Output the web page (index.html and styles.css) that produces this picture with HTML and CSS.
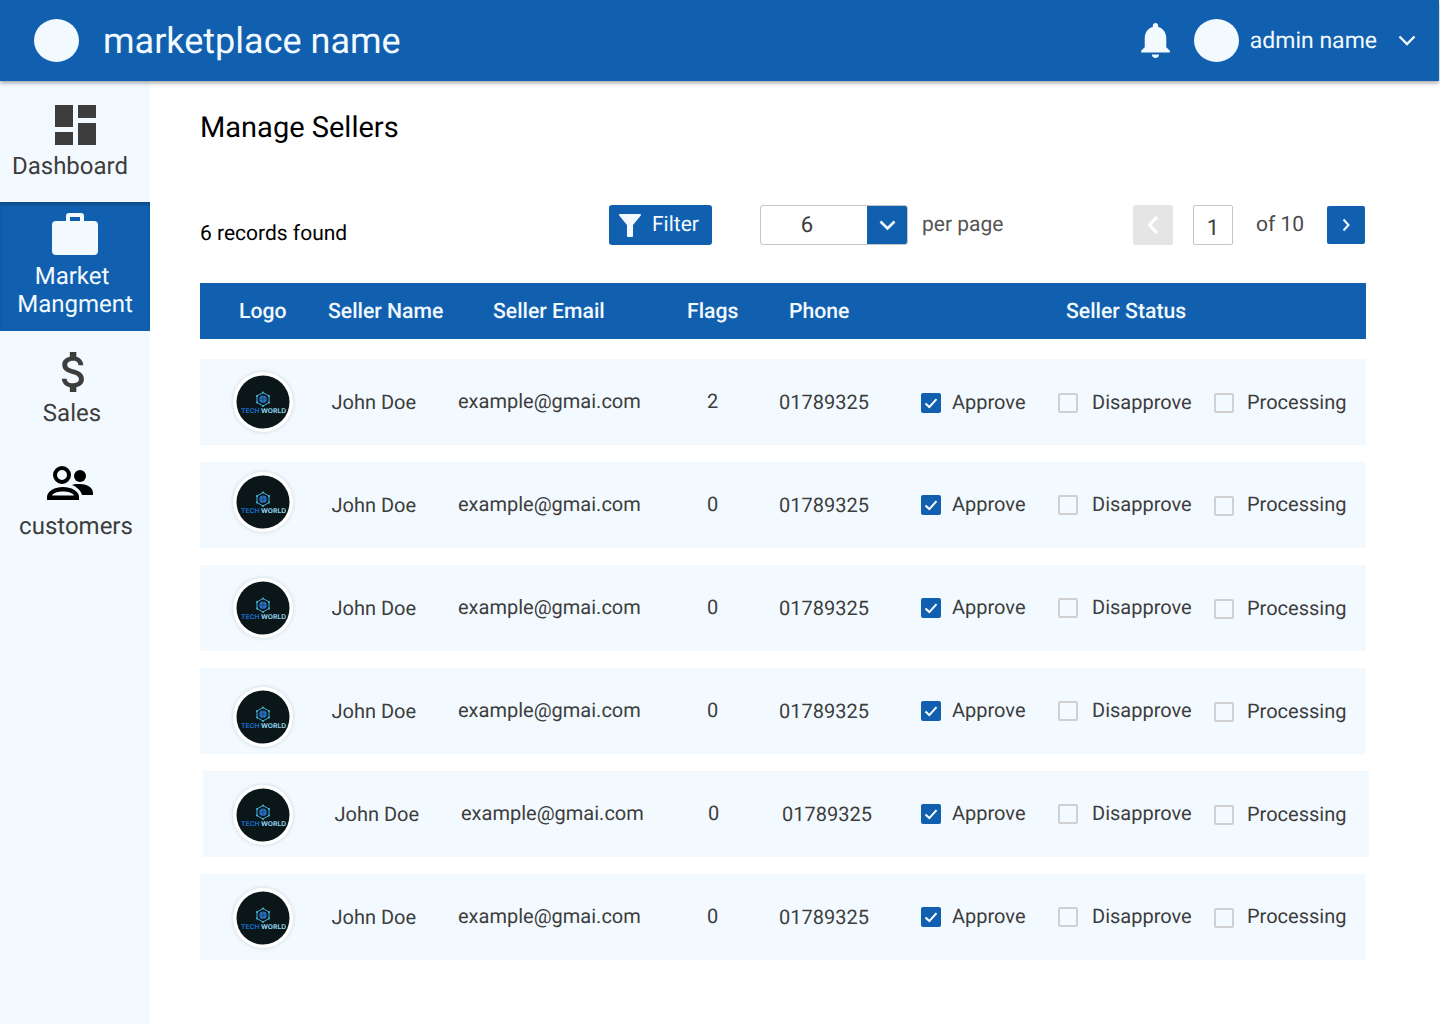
FILE: index.html
```html
<!DOCTYPE html>
<html lang="en">
<head>
    <meta charset="UTF-8">
    <meta name="viewport" content="width=device-width, initial-scale=1.0">
    <title>Manage Sellers</title>
    <link rel="stylesheet" href="styles.css">
</head>
<body>
    <svg class="sprites" width="0" height="0">
        <symbol id="logo-mark" viewBox="0 0 60 60">
            <circle cx="30" cy="30" r="30" fill="#ffffff"/>
            <circle cx="30" cy="30" r="26.500" fill="#0a1618"/>
            <path d="M30 20.500l6 3.500v6.500l-6 3.500-6-3.500V24z" fill="none" stroke="#45b5dc" stroke-width="1"/>
            <circle cx="30" cy="20.500" r="1" fill="#45b5dc"/>
            <circle cx="36" cy="24" r="1" fill="#45b5dc"/>
            <circle cx="36" cy="30.500" r="1" fill="#45b5dc"/>
            <circle cx="30" cy="34" r="1" fill="#45b5dc"/>
            <circle cx="24" cy="30.500" r="1" fill="#45b5dc"/>
            <circle cx="24" cy="24" r="1" fill="#45b5dc"/>
            <circle cx="30" cy="27.200" r="3.800" fill="#2a6fc0"/>
            <path d="M26.500 27.200h7M30 23.500v7.400" stroke="#123a6a" stroke-width="0.600"/>
        </symbol>
        <symbol id="tick" viewBox="0 0 20 20">
            <path d="M4.500 10.500l3.800 3.600 7.200-8" fill="none" stroke="#ffffff" stroke-width="2"/>
        </symbol>
    </svg>

    <header class="topbar">
        <div class="brand">
            <span class="avatar brand-logo"></span>
            <span class="brand-name">marketplace name</span>
        </div>
        <div class="account">
            <svg class="bell" viewBox="4 2.5 16 19.5"><path d="M12 22c1.100 0 2-.9 2-2h-4c0 1.100.9 2 2 2zm6-6v-5c0-3.070-1.630-5.640-4.500-6.320V4c0-.83-.67-1.500-1.500-1.500s-1.500.67-1.500 1.500v.68C7.640 5.360 6 7.920 6 11v5l-2 2v1h16v-1l-2-2z" fill="#f3faff"/></svg>
            <span class="avatar"></span>
            <span class="admin-name">admin name</span>
            <svg class="account-arrow" viewBox="0 0 18 11"><path d="M1.500 1.500L9 9l7.500-7.500" fill="none" stroke="#f3faff" stroke-width="2.400"/></svg>
        </div>
    </header>

    <div class="layout">
        <nav class="sidebar">
            <a class="nav-item nav-dashboard">
                <svg class="nav-icon" width="41" height="40" viewBox="0 0 41 40"><path d="M0 0h18v22H0zM0 27h18v13H0zM23 0h18v13H23zM23 18h18v22H23z" fill="#3d3d3d"/></svg>
                <span>Dashboard</span>
            </a>
            <a class="nav-item nav-market active">
                <svg class="nav-icon" width="46" height="42" viewBox="0 0 46 42"><path d="M14 8V3a3 3 0 0 1 3-3h12a3 3 0 0 1 3 3v5h10a4 4 0 0 1 4 4v26a4 4 0 0 1-4 4H4a4 4 0 0 1-4-4V12a4 4 0 0 1 4-4zm4-4v4h10V4z" fill="#f3faff" fill-rule="evenodd"/></svg>
                <span><span class="market-word">Market</span>Mangment</span>
            </a>
            <a class="nav-item nav-sales">
                <svg class="nav-icon" width="26" height="40" viewBox="5 3 12 18" preserveAspectRatio="none"><path d="M11.800 10.900c-2.270-.59-3-1.200-3-2.150 0-1.090 1.010-1.850 2.700-1.850 1.780 0 2.440.85 2.500 2.100h2.210c-.07-1.720-1.120-3.300-3.210-3.810V3h-3v2.160c-1.940.42-3.500 1.680-3.500 3.610 0 2.310 1.910 3.460 4.700 4.130 2.500.6 3 1.480 3 2.410 0 .69-.49 1.790-2.700 1.790-2.060 0-2.870-.92-2.980-2.100h-2.200c.12 2.190 1.760 3.420 3.680 3.830V21h3v-2.150c1.950-.37 3.500-1.500 3.500-3.550 0-2.840-2.430-3.810-4.700-4.400z" fill="#3d3d3d"/></svg>
                <span>Sales</span>
            </a>
            <a class="nav-item nav-customers">
                <svg class="nav-icon" width="46" height="34" viewBox="0 0 46 34">
                    <circle cx="15" cy="9" r="7" fill="none" stroke="#000000" stroke-width="4"/>
                    <circle cx="33" cy="10" r="6" fill="#000000"/>
                    <path d="M0 34v-3c0-6 8-10 16-10s16 4 16 10v3zM5 29.500h22c-1-2.500-6-4-11-4s-10 1.500-11 4z" fill="#000000" fill-rule="evenodd"/>
                    <path d="M25 19c3-1.500 6-1 8-1 6 0 13 3 13 9v2H35c-1-4-5-8-10-10z" fill="#000000"/>
                </svg>
                <span>customers</span>
            </a>
        </nav>

        <main class="content">
            <h1 class="page-title">Manage Sellers</h1>

            <div class="toolbar">
                <span class="records">6 records found</span>
                <button class="filter-btn" type="button">
                    <svg width="22" height="23" viewBox="0 0 22 23"><path d="M1 0h20a1 1 0 0 1 .8 1.600L14 11v11a1 1 0 0 1-1 1H9a1 1 0 0 1-1-1V11L.2 1.600A1 1 0 0 1 1 0z" fill="#f3faff"/></svg>
                    Filter
                </button>
                <div class="per-page-select">
                    <span class="per-page-value">6</span>
                    <span class="per-page-arrow">
                        <svg width="17" height="11" viewBox="0 0 17 11"><path d="M1.500 1.500L8.500 8.500l7-7" fill="none" stroke="#f3faff" stroke-width="2.600"/></svg>
                    </span>
                </div>
                <span class="per-page-label">per page</span>
                <div class="pager">
                    <span class="page-btn prev">
                        <svg width="12" height="20" viewBox="0 0 12 20"><path d="M10 2L2.500 10l7.500 8" fill="none" stroke="#ffffff" stroke-width="3"/></svg>
                    </span>
                    <span class="page-input">1</span>
                    <span class="page-total">of 10</span>
                    <span class="page-btn next">
                        <svg width="8" height="14" viewBox="0 0 8 14"><path d="M1.500 1.500L6.500 7l-5 5.500" fill="none" stroke="#f3faff" stroke-width="2"/></svg>
                    </span>
                </div>
            </div>

            <div class="table-head">
                <span>Logo</span>
                <span>Seller Name</span>
                <span>Seller Email</span>
                <span>Flags</span>
                <span>Phone</span>
                <span>Seller Status</span>
            </div>

            <div class="table-rows">
                <div class="row">
                    <svg class="seller-logo" viewBox="0 0 60 60"><use href="#logo-mark"/><text x="8" y="41" class="logo-text" textLength="45" lengthAdjust="spacingAndGlyphs"><tspan fill="#1a6fd0">TECH</tspan> <tspan fill="#8fd4ef">WORLD</tspan></text></svg>
                    <span>John Doe</span>
                    <span class="raised">example@gmai.com</span>
                    <span class="flags raised">2</span>
                    <span class="phone">01789325</span>
                    <label class="status"><span class="check on"><svg><use href="#tick"/></svg></span><span class="status-text">Approve</span></label>
                    <label class="status disapprove"><span class="check"></span><span class="status-text">Disapprove</span></label>
                    <label class="status processing"><span class="check"></span><span class="status-text">Processing</span></label>
                </div>
                <div class="row">
                    <svg class="seller-logo logo-up" viewBox="0 0 60 60"><use href="#logo-mark"/><text x="8" y="41" class="logo-text" textLength="45" lengthAdjust="spacingAndGlyphs"><tspan fill="#1a6fd0">TECH</tspan> <tspan fill="#8fd4ef">WORLD</tspan></text></svg>
                    <span>John Doe</span>
                    <span class="raised">example@gmai.com</span>
                    <span class="flags raised">0</span>
                    <span class="phone">01789325</span>
                    <label class="status"><span class="check on"><svg><use href="#tick"/></svg></span><span class="status-text">Approve</span></label>
                    <label class="status disapprove"><span class="check"></span><span class="status-text">Disapprove</span></label>
                    <label class="status processing"><span class="check"></span><span class="status-text">Processing</span></label>
                </div>
                <div class="row">
                    <svg class="seller-logo" viewBox="0 0 60 60"><use href="#logo-mark"/><text x="8" y="41" class="logo-text" textLength="45" lengthAdjust="spacingAndGlyphs"><tspan fill="#1a6fd0">TECH</tspan> <tspan fill="#8fd4ef">WORLD</tspan></text></svg>
                    <span>John Doe</span>
                    <span class="raised">example@gmai.com</span>
                    <span class="flags raised">0</span>
                    <span class="phone">01789325</span>
                    <label class="status"><span class="check on"><svg><use href="#tick"/></svg></span><span class="status-text">Approve</span></label>
                    <label class="status disapprove"><span class="check"></span><span class="status-text">Disapprove</span></label>
                    <label class="status processing"><span class="check"></span><span class="status-text">Processing</span></label>
                </div>
                <div class="row">
                    <svg class="seller-logo logo-down" viewBox="0 0 60 60"><use href="#logo-mark"/><text x="8" y="41" class="logo-text" textLength="45" lengthAdjust="spacingAndGlyphs"><tspan fill="#1a6fd0">TECH</tspan> <tspan fill="#8fd4ef">WORLD</tspan></text></svg>
                    <span>John Doe</span>
                    <span class="raised">example@gmai.com</span>
                    <span class="flags raised">0</span>
                    <span class="phone">01789325</span>
                    <label class="status"><span class="check on"><svg><use href="#tick"/></svg></span><span class="status-text">Approve</span></label>
                    <label class="status disapprove"><span class="check"></span><span class="status-text">Disapprove</span></label>
                    <label class="status processing"><span class="check"></span><span class="status-text">Processing</span></label>
                </div>
                <div class="row row-shifted">
                    <svg class="seller-logo logo-low" viewBox="0 0 60 60"><use href="#logo-mark"/><text x="8" y="41" class="logo-text" textLength="45" lengthAdjust="spacingAndGlyphs"><tspan fill="#1a6fd0">TECH</tspan> <tspan fill="#8fd4ef">WORLD</tspan></text></svg>
                    <span>John Doe</span>
                    <span class="raised">example@gmai.com</span>
                    <span class="flags raised">0</span>
                    <span class="phone">01789325</span>
                    <label class="status"><span class="check on"><svg><use href="#tick"/></svg></span><span class="status-text">Approve</span></label>
                    <label class="status disapprove"><span class="check"></span><span class="status-text">Disapprove</span></label>
                    <label class="status processing"><span class="check"></span><span class="status-text">Processing</span></label>
                </div>
                <div class="row">
                    <svg class="seller-logo logo-low" viewBox="0 0 60 60"><use href="#logo-mark"/><text x="8" y="41" class="logo-text" textLength="45" lengthAdjust="spacingAndGlyphs"><tspan fill="#1a6fd0">TECH</tspan> <tspan fill="#8fd4ef">WORLD</tspan></text></svg>
                    <span>John Doe</span>
                    <span class="raised">example@gmai.com</span>
                    <span class="flags raised">0</span>
                    <span class="phone">01789325</span>
                    <label class="status"><span class="check on"><svg><use href="#tick"/></svg></span><span class="status-text">Approve</span></label>
                    <label class="status disapprove"><span class="check"></span><span class="status-text">Disapprove</span></label>
                    <label class="status processing"><span class="check"></span><span class="status-text">Processing</span></label>
                </div>
            </div>
        </main>
    </div>
</body>
</html>
```

FILE: styles.css
```css
* {
    box-sizing: border-box;
}
body {
    margin: 0;
    height: 1024px;
    overflow: hidden;
    background-color: #ffffff;
    font-family: Roboto, Arial, sans-serif;
    color: #3d3d3d;
    text-rendering: geometricPrecision;
}
.sprites {
    display: block;
    height: 0;
}
.logo-text {
    font-family: Inter, Roboto, sans-serif;
    font-size: 6.5px;
    font-weight: 700;
}

/* top bar */
.topbar {
    position: relative;
    z-index: 2;
    width: 1439px;
    height: 81px;
    display: flex;
    align-items: center;
    justify-content: space-between;
    background-color: #1160b0;
    box-shadow: 0 2px 4px rgba(0, 0, 0, 0.35);
    color: #f3faff;
}
.brand {
    display: flex;
    align-items: center;
    padding-left: 34px;
}
.avatar {
    display: block;
    width: 45px;
    height: 43px;
    border-radius: 50%;
    background-color: #f3faff;
}
.brand-name {
    margin-left: 24px;
    font-size: 36px;
}
.account {
    display: flex;
    align-items: center;
    padding-right: 23px;
}
.bell {
    width: 29px;
    height: 35px;
    margin-right: 24px;
}
.admin-name {
    margin-left: 11px;
    font-size: 23px;
}
.account-arrow {
    width: 18px;
    height: 11px;
    margin-left: 21px;
}

/* sidebar */
.layout {
    display: flex;
    height: 943px;
}
.sidebar {
    width: 150px;
    flex-shrink: 0;
    background-color: #f3faff;
}
.nav-item {
    display: flex;
    flex-direction: column;
    align-items: center;
    font-size: 24px;
    line-height: 28px;
    text-align: center;
}
.nav-icon {
    display: block;
}
.nav-dashboard {
    height: 121px;
    padding-top: 24px;
}
.nav-dashboard span {
    margin-top: 7px;
    margin-right: 10px;
}
.nav-market {
    height: 129px;
    padding-top: 11px;
}
.nav-market > span {
    margin-top: 7px;
}
.market-word {
    display: block;
    margin-right: 6px;
}
.active {
    background-color: #1160b0;
    color: #f3faff;
    box-shadow: inset 0 3px 3px rgba(0, 0, 0, 0.2);
}
.nav-sales {
    padding-top: 21px;
    padding-right: 6px;
}
.nav-sales span {
    margin-top: 7px;
}
.nav-customers {
    padding-top: 39px;
}
.nav-customers svg {
    margin-right: 10px;
}
.nav-customers span {
    margin-top: 12px;
    margin-left: 2px;
}

/* content */
.content {
    flex: 1;
    padding: 29px 0 0 50px;
}
.page-title {
    margin: 0;
    font-size: 29px;
    font-weight: 400;
    line-height: 36px;
    color: #000000;
}
.toolbar {
    display: flex;
    align-items: center;
    height: 40px;
    margin-top: 59px;
    font-size: 21px;
}
.records {
    width: 409px;
    padding-top: 17px;
    color: #000000;
}
.filter-btn {
    display: flex;
    align-items: center;
    gap: 11px;
    width: 103px;
    height: 40px;
    padding: 0 0 0 10px;
    border: none;
    border-radius: 3px;
    background-color: #1160b0;
    color: #f3faff;
    font-family: inherit;
    font-size: 21px;
    text-rendering: inherit;
}
.per-page-select {
    display: flex;
    width: 148px;
    height: 40px;
    margin-left: 48px;
    border: 1px solid #c4c4c4;
    border-radius: 3px;
    overflow: hidden;
}
.per-page-value {
    width: 106px;
    padding-right: 14px;
    font-size: 22px;
    line-height: 40px;
    text-align: center;
}
.per-page-arrow {
    flex: 1;
    display: flex;
    align-items: center;
    justify-content: center;
    background-color: #1160b0;
}
.per-page-label {
    margin-left: 14px;
    color: #555555;
}
.pager {
    display: flex;
    align-items: center;
    margin-left: auto;
    margin-right: 75px;
}
.page-btn {
    display: flex;
    align-items: center;
    justify-content: center;
    border-radius: 2px;
}
.prev {
    width: 40px;
    height: 40px;
    background-color: #e5e5e5;
}
.next {
    width: 38px;
    height: 38px;
    margin-left: 23px;
    background-color: #1160b0;
}
.page-input {
    width: 40px;
    height: 40px;
    margin-left: 20px;
    border: 1px solid #c4c4c4;
    border-radius: 2px;
    font-size: 22px;
    line-height: 45px;
    text-align: center;
}
.page-total {
    margin-left: 23px;
    color: #4a4a4a;
}

/* table */
.table-head {
    display: grid;
    grid-template-columns: 89px 165px 194px 102px 277px 1fr;
    align-items: center;
    width: 1166px;
    height: 56px;
    margin-top: 38px;
    padding-left: 39px;
    background-color: #1160b0;
    color: #f3faff;
    font-size: 21.2px;
    font-weight: 500;
}
.table-rows {
    display: flex;
    flex-direction: column;
    gap: 17px;
    margin-top: 20px;
}
.row {
    display: grid;
    grid-template-columns: 131.500px 126.500px 224px 61px 178px 137px 156px 1fr;
    align-items: center;
    width: 1166px;
    height: 86px;
    background-color: #f3faff;
    font-size: 20px;
}
.row-shifted {
    margin-left: 3px;
    grid-template-columns: 131.500px 126.500px 224px 61px 175px 137px 156px 1fr;
}
.seller-logo {
    display: block;
    width: 60px;
    height: 60px;
    margin-left: 32.5px;
    border-radius: 50%;
    box-shadow: 0 0 4px rgba(0, 0, 0, 0.15);
}
.row-shifted .seller-logo {
    margin-left: 29.5px;
}
.logo-up {
    margin-bottom: 6px;
}
.logo-down {
    margin-top: 12px;
}
.logo-low {
    margin-top: 2px;
}
.raised {
    padding-bottom: 2px;
}
.flags {
    text-align: center;
}
.row-shifted .flags {
    padding-right: 4px;
}
.phone {
    padding-left: 36px;
}
.status {
    display: flex;
    align-items: center;
}
.status-text {
    padding-bottom: 2px;
}
.check {
    flex-shrink: 0;
    width: 20px;
    height: 20px;
    margin-right: 11px;
    border: 2px solid #d0d0d0;
    border-radius: 2px;
}
.disapprove .check {
    margin-right: 14px;
}
.processing .check {
    margin-top: 2px;
    margin-right: 13px;
}
.row:first-child .check {
    margin-top: 2px;
}
.row:first-child .status-text {
    padding-bottom: 0;
}
.row:nth-child(n+3):nth-child(-n+5) .processing .status-text {
    padding-bottom: 0;
}
.on {
    border: none;
    background-color: #1160b0;
}
.on svg {
    display: block;
    width: 20px;
    height: 20px;
}
```
